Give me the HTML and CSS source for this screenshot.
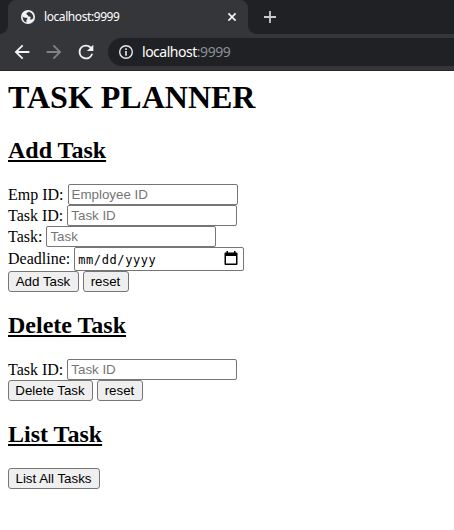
FILE: index.html
```html
<!DOCTYPE html>
<html lang="en">
<head>
<meta charset="utf-8">
<title>localhost:9999</title>
<link rel="stylesheet" href="styles.css">
</head>
<body>
<header class="browser">
  <div class="tabs">
    <div class="tab">
      <svg class="globe" width="16" height="16" viewBox="0 0 24 24"><circle cx="12" cy="12" r="10.6" fill="#f1f3f4"/><path fill="#35363a" d="M4.2 9.2c0 4 2.2 3.5 5.7 3.8 1.8.2 1.5 2 .4 2.700-.9.6-1.100 2-.4 4.400C5.900 19.300 3.300 15.400 4.200 9.200zM13.200 4c-1 1.400-3.600.9-3.600 3.300 0 1.700 2.200 1.200 2.700 3.200.4 1.500 3.300.2 3.700 1.700.3 1.300-1.100 1.900-.7 3.100.6 1.400 2.500.3 4.700-1.300.5-4.800-2.100-8.800-6.800-10z"/></svg>
      <span class="title">localhost:9999</span>
      <svg class="close" width="10" height="10" viewBox="0 0 10 10"><path d="M1.400 1.400l7.200 7.200M8.600 1.400L1.400 8.600" stroke="#f1f3f4" stroke-width="1.700"/></svg>
    </div>
    <svg class="plus" width="12" height="12" viewBox="0 0 12 12"><path d="M6 0v12M0 6h12" stroke="#c8cacd" stroke-width="1.800"/></svg>
  </div>
  <div class="toolbar">
    <svg class="nav" width="22" height="22" viewBox="0 0 24 24"><path fill="#f1f3f4" d="M20 11H7.830l5.590-5.590L12 4l-8 8 8 8 1.410-1.410L7.830 13H20z"/></svg>
    <svg class="nav" width="22" height="22" viewBox="0 0 24 24"><path fill="#828386" d="M12 4l-1.410 1.410L16.170 11H4v2h12.170l-5.580 5.590L12 20l8-8z"/></svg>
    <svg class="nav" width="22" height="22" viewBox="0 0 24 24"><path fill="#f1f3f4" d="M17.650 6.350A7.960 7.960 0 0 0 12 4a8 8 0 1 0 7.730 10h-2.080A6 6 0 1 1 12 6c1.660 0 3.140.69 4.220 1.780L13 11h7V4z"/></svg>
    <div class="address">
      <svg width="16" height="16" viewBox="0 0 16 16"><circle cx="8" cy="8" r="6.300" fill="none" stroke="#e8eaed" stroke-width="1.400"/><path d="M7.200 4.300h1.600v1.600H7.200zM7.200 7.100h1.600v4.600H7.200z" fill="#e8eaed"/></svg>
      <span class="url">localhost<span class="port">:9999</span></span>
    </div>
  </div>
</header>
<main>
  <h1>TASK PLANNER</h1>
  <h2>Add Task</h2>
  <form>
    <div>Emp ID: <input type="text" placeholder="Employee ID"></div>
    <div>Task ID: <input type="text" placeholder="Task ID"></div>
    <div>Task: <input type="text" placeholder="Task"></div>
    <div class="date-row">Deadline: <span class="date"><span>mm/dd/yyyy</span><svg width="14" height="15" viewBox="0 0 14 15"><path d="M2.500 0h1.500v1.500h6V0h1.500v1.500h1Q13.500 1.500 13.500 2.500v10.500q0 1-1 1h-11q-1 0-1-1V2.500q0-1 1-1h1zM2 5v7.500h10V5z" fill="#000" fill-rule="evenodd"/></svg></span></div>
    <div class="actions"><button type="button">Add Task</button><button type="reset" class="reset">reset</button></div>
  </form>
  <h2>Delete Task</h2>
  <form>
    <div>Task ID: <input type="text" placeholder="Task ID"></div>
    <div class="actions"><button type="button" class="delete">Delete Task</button><button type="reset" class="reset">reset</button></div>
  </form>
  <h2>List Task</h2>
  <div class="actions"><button type="button" class="list">List All Tasks</button></div>
</main>
</body>
</html>
```
FILE: styles.css
```css
* { box-sizing: border-box; }
html { overflow: hidden; }
body { margin: 0; background: #fff; color: #000; font: 16px "Liberation Serif", serif; }
svg { display: block; flex: none; }
.browser { height: 71px; background: #35363a; border-bottom: 1px solid #292629; font-family: "Noto Sans", "Open Sans", sans-serif; overflow: hidden; }
.tabs { display: flex; height: 34px; background: #202124; }
.tab { position: relative; display: flex; align-items: center; width: 240px; margin-left: 8px; padding: 0 11px 0 12px; background: #35363a; border-radius: 8px 8px 0 0; }
.tab::before, .tab::after { content: ""; position: absolute; bottom: 0; width: 8px; height: 8px; }
.tab::before { left: -8px; background: radial-gradient(circle at 0 0, #202124 7.5px, #35363a 8px); }
.tab::after { right: -8px; background: radial-gradient(circle at 100% 0, #202124 7.5px, #35363a 8px); }
.title { flex: 1; margin-left: 8px; font-size: 12px; letter-spacing: -.42px; color: #fff; line-height: 16px; }
.plus { margin: 11px 0 0 16px; }
.toolbar { display: flex; align-items: center; height: 36px; padding-left: 11px; gap: 10px; }
.address { display: flex; align-items: center; flex: 1; height: 28px; margin-left: 1px; padding-left: 10px; background: #202124; border-radius: 14px 0 0 14px; }
.url { margin-left: 8px; font-size: 14px; letter-spacing: -.48px; color: #fff; line-height: 20px; }
.port { color: #8b9095; }
main { padding: 8px; }
h1 { margin: 0 0 21.44px; font-size: 32px; line-height: 37px; }
h2 { margin: 19.92px 0; font-size: 24px; line-height: 27px; text-decoration: underline; }
form > div { height: 21px; line-height: 21px; white-space: nowrap; }
input { width: 170px; height: 21px; margin: 0; padding: 0 2px 1px 3px; border: 1px solid #767676; border-radius: 2px; font: 13.333px "Liberation Sans", sans-serif; vertical-align: top; }
input::placeholder { color: #757575; }
form > .date-row { height: 24px; line-height: 24px; }
.date { display: inline-flex; align-items: center; justify-content: space-between; width: 170px; height: 24px; padding: 2px 5px 0 3px; border: 1px solid #767676; border-radius: 2px; font: 12px "DejaVu Sans Mono", monospace; letter-spacing: .6px; vertical-align: top; }
.date svg { margin-top: -3px; }
.actions { display: flex; gap: 4px; }
button { width: 71px; height: 21px; margin: 0; padding: 0 1px 0 0; border: 1px solid #767676; border-radius: 3px; background: #efefef; color: #000; font: 13.333px "Liberation Sans", sans-serif; white-space: nowrap; }
.reset { width: 46px; }
.delete { width: 85px; }
.list { width: 92px; }
```
